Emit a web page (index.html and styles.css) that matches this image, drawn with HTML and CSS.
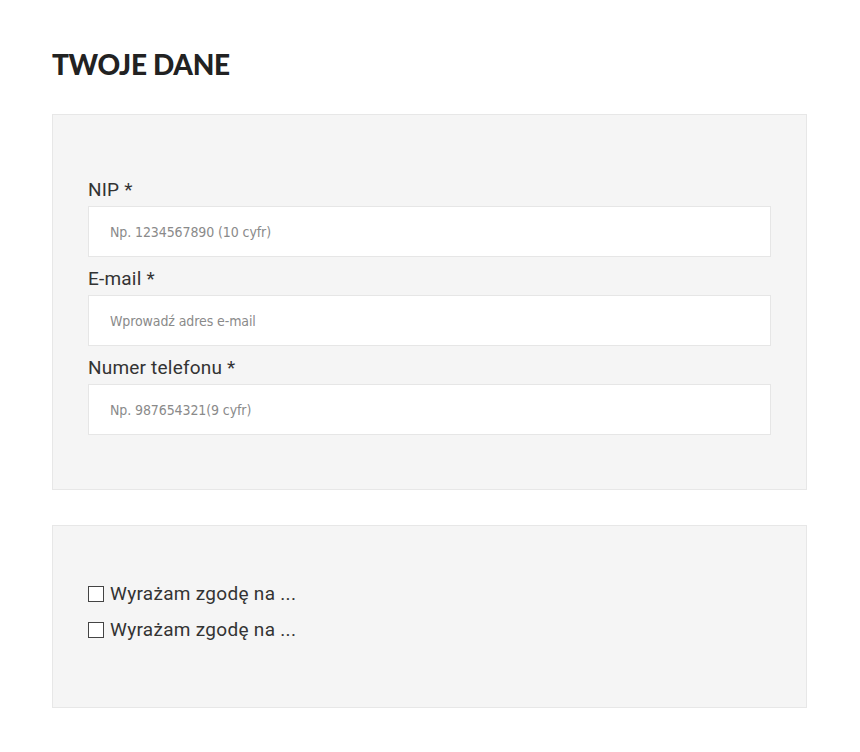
FILE: index.html
```html
<!DOCTYPE html>
<html lang="pl">
<head>
<meta charset="utf-8">
<link rel="stylesheet" href="styles.css">
</head>
<body>
<main class="page">
  <h1 class="title">TWOJE DANE</h1>
  <section class="panel panel-fields">
    <div class="field">
      <label class="label" for="nip">NIP *</label>
      <input class="input" id="nip" type="text" placeholder="Np. 1234567890 (10 cyfr)">
    </div>
    <div class="field">
      <label class="label" for="email">E-mail *</label>
      <input class="input" id="email" type="text" placeholder="Wprowadź adres e-mail">
    </div>
    <div class="field">
      <label class="label" for="tel">Numer telefonu *</label>
      <input class="input" id="tel" type="text" placeholder="Np. 987654321(9 cyfr)">
    </div>
  </section>
  <section class="panel panel-consents">
    <div class="consent"><span class="box"></span><span>Wyrażam zgodę na ...</span></div>
    <div class="consent"><span class="box"></span><span>Wyrażam zgodę na ...</span></div>
  </section>
</main>
</body>
</html>
```
FILE: styles.css
```css
html, body {
  margin: 0;
  padding: 0;
  background: #ffffff;
}
body {
  font-family: "Roboto", "Liberation Sans", sans-serif;
  color: #333333;
}
.page {
  width: 755px;
  padding: 49px 0 0 52px;
}
.title {
  margin: 0 0 35px 0;
  font-family: "Lato", "Liberation Sans", sans-serif;
  font-weight: 900;
  font-size: 28px;
  line-height: 30px;
  color: #222222;
  letter-spacing: -0.3px;
}
.panel {
  background: #f5f5f5;
  border: 1px solid #e7e7e7;
  box-sizing: border-box;
}
.panel-fields {
  height: 376px;
  padding: 63px 35px 0 35px;
  display: flex;
  flex-direction: column;
  gap: 10px;
}
.field {
  display: flex;
  flex-direction: column;
  gap: 4px;
}
.label {
  font-size: 19px;
  line-height: 24px;
  letter-spacing: 0.2px;
  color: #333333;
}
.input {
  height: 51px;
  box-sizing: border-box;
  border: 1px solid #e6e6e6;
  background: #ffffff;
  padding: 0 21px;
  font-family: "DejaVu Sans Condensed", "Liberation Sans Narrow", "Roboto", sans-serif;
  font-size: 14px;
  letter-spacing: -0.1px;
  color: #555555;
  outline: none;
}
.input::placeholder {
  color: #8a8a8a;
}
.panel-consents {
  margin-top: 35px;
  height: 183px;
  padding: 56px 35px 0 35px;
  display: flex;
  flex-direction: column;
  gap: 12px;
}
.consent {
  display: flex;
  align-items: center;
  gap: 6px;
  font-size: 19px;
  line-height: 24px;
  letter-spacing: 0.3px;
  color: #333333;
}
.box {
  width: 14px;
  height: 14px;
  border: 1px solid #444444;
  background: #ffffff;
  flex: none;
}
```
